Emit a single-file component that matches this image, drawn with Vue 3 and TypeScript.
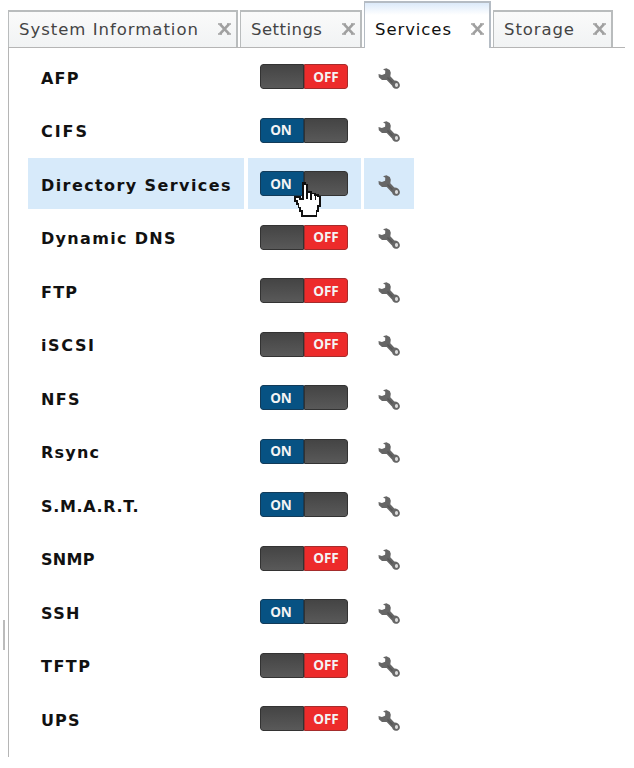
<script setup lang="ts">
interface Tab { title: string; width: number; text: number; pad: number; active?: boolean }
interface Service { name: string; on: boolean; text: number; hover?: boolean }

const tabs: Tab[] = [
  { title: 'System Information', width: 230, text: 178, pad: 10 },
  { title: 'Settings', width: 122, text: 70, pad: 10 },
  { title: 'Services', width: 127, text: 75, pad: 10, active: true },
  { title: 'Storage', width: 120, text: 69, pad: 10 },
]

const services: Service[] = [
  { name: 'AFP', on: false, text: 36.5 },
  { name: 'CIFS', on: true, text: 45 },
  { name: 'Directory Services', on: true, text: 188.5, hover: true },
  { name: 'Dynamic DNS', on: false, text: 133.5 },
  { name: 'FTP', on: false, text: 35 },
  { name: 'iSCSI', on: false, text: 52 },
  { name: 'NFS', on: true, text: 37.5 },
  { name: 'Rsync', on: true, text: 57 },
  { name: 'S.M.A.R.T.', on: true, text: 96.5 },
  { name: 'SNMP', on: false, text: 52.5 },
  { name: 'SSH', on: true, text: 37.5 },
  { name: 'TFTP', on: false, text: 48 },
  { name: 'UPS', on: false, text: 37.5 },
]

const ctx = document.createElement('canvas').getContext('2d')!
function spacing(text: string, width: number, font: string) {
  ctx.font = font
  return { letterSpacing: ((width + 1 - ctx.measureText(text).width) / (text.length - 1)).toFixed(2) + 'px' }
}
</script>

<template>
  <div class="page">
    <div class="gutter"><i class="grip"></i></div>
    <main class="main">
      <nav class="tabs">
        <div v-for="t in tabs" :key="t.title" class="tab" :class="{ active: t.active }" :style="{ width: t.width + 'px', paddingLeft: t.pad + 'px' }">
          <span class="title" :style="spacing(t.title, t.text, '16.5px DejaVu Sans')">{{ t.title }}</span>
          <svg class="close" width="13" height="12" viewBox="0 0 13 12"><path d="M2 1.200 11 10.800M11 1.200 2 10.800" stroke-width="2.700" /><path d="M0 1h4M9 1h4M0 11h4M9 11h4" stroke-width="1.600" /></svg>
        </div>
      </nav>
      <section class="services">
        <div v-for="s in services" :key="s.name" class="row" :class="{ hover: s.hover }">
          <div class="cell name"><span :style="spacing(s.name, s.text, 'bold 16px DejaVu Sans')">{{ s.name }}</span></div>
          <div class="cell toggle">
            <div class="switch" :class="s.on ? 'on' : 'off'">
              <span class="half left">{{ s.on ? 'ON' : '' }}</span>
              <span class="half right">{{ s.on ? '' : 'OFF' }}</span>
            </div>
            <svg v-if="s.hover" class="cursor" width="27" height="35" viewBox="0 0 27 35" shape-rendering="crispEdges">
              <path d="M9 1h2v1.500h2V10h4v1.500h4V13h3v1.500h2V24h-2v5h-1.500v5H8v-5H6v-3.500H4.500V22H3v-3H1v-4h5v2h3z" fill="#fff" stroke="#111" stroke-width="1.500" />
              <path d="M13 10v7M17 11.500v6M21.500 14v4" fill="none" stroke="#111" stroke-width="1.500" />
            </svg>
          </div>
          <div class="cell tool">
            <svg width="23" height="22" viewBox="0 0 23 22">
              <path d="M5 1.300 8.500.3l3.300 1.600 1 2.800-.5 3.500 4 4.300c2.700-.2 4.800 1.400 5.500 4 .5 2.700-1.600 4.700-4 4.300-2-.2-3.200-1.500-3.600-3.100L8.700 12H4L.8 9.300.5 6l3.400 1 3.200-1.200.2-3z" fill="#666" />
              <path d="m9.500 9.500 5 5" stroke="#565656" stroke-width="1.500" />
              <ellipse cx="18.500" cy="16.900" rx="1.600" ry="2" fill="#ddd" />
            </svg>
          </div>
        </div>
      </section>
    </main>
  </div>
</template>

<style>
body { background: #fff; }
</style>

<style scoped>
.page { display: flex; height: 757px; width: 634px; overflow: hidden; font-family: "DejaVu Sans", Verdana, sans-serif; }
.gutter { width: 8px; padding: 620px 0 0 3px; box-sizing: border-box; }
.grip { display: block; width: 2px; height: 30px; background: #bbb; }
.main { width: 617px; }
.tabs { display: flex; align-items: flex-end; gap: 2px; height: 48px; box-sizing: border-box; border-bottom: 1px solid #b5b5b5; }
.tab { display: flex; align-items: center; justify-content: space-between; box-sizing: border-box; height: 37px; padding-right: 5px; border: solid #b9bcbd; border-width: 2px 2px 0 1px; background: linear-gradient(#fafafa, #f1f3f4); color: #444; }
.tab.active { height: 47px; margin-bottom: -1px; padding-top: 8px; background: linear-gradient(#dceafa, #fff 12px); color: #111; border-color: #b5bcc4; }
.title { font-size: 16.500px; line-height: 20px; white-space: nowrap; }
.close { fill: none; stroke: #a0a0a0; flex: none; margin-top: -1px; }
.services { height: 709px; box-sizing: border-box; border-left: 1px solid #b5b5b5; padding: 3px 0 0 19px; }
.row { display: grid; grid-template-columns: 216px 113px 50px; column-gap: 3.500px; height: 51px; margin-bottom: 2.530px; }
.cell { display: flex; align-items: center; }
.hover .cell { background: #d7eafa; }
.name { padding: 3px 0 0 13px; font-size: 16px; font-weight: bold; color: #111; white-space: nowrap; }
.toggle { position: relative; padding-left: 12.500px; }
.switch { display: flex; width: 88px; height: 25px; border-radius: 3px; overflow: hidden; font: bold 13.500px "Open Sans", "Liberation Sans", sans-serif; color: #f4f4f4; }
.half { display: flex; align-items: center; justify-content: center; box-sizing: border-box; width: 44px; border: 1px solid #333; background: linear-gradient(#444, #595959); }
.on .left { background: #075283; border-color: #123b59; padding-right: 2px; }
.off .right { background: #ed2b2b; border-color: #a52c2c; }
.left { border-radius: 3px 0 0 3px; }
.right { border-radius: 0 3px 3px 0; }
.cursor { position: absolute; left: 46px; top: 24px; }
.tool { padding: 4px 0 0 14px; }
.name, .tool, .toggle { box-sizing: border-box; }
</style>
